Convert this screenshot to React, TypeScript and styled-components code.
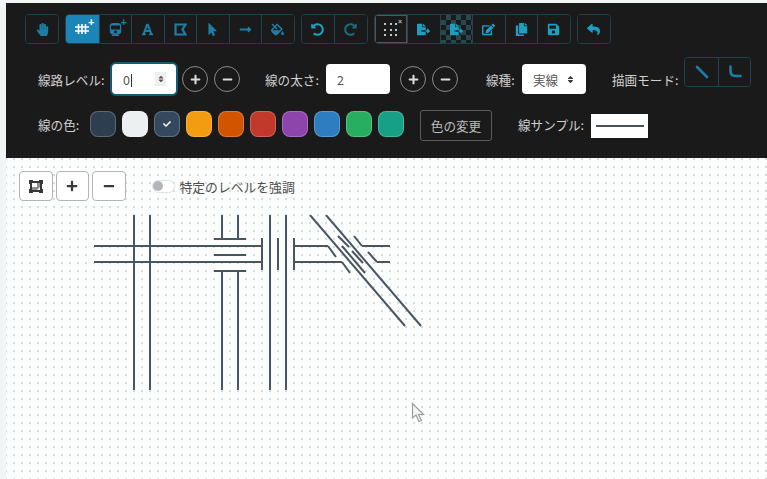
import React from "react";
import styled, { createGlobalStyle } from "styled-components";
import {
  FaHandPaper,
  FaTrain,
  FaFont,
  FaMousePointer,
  FaLongArrowAltRight,
  FaFillDrip,
  FaUndoAlt,
  FaRedoAlt,
  FaFileExport,
  FaEdit,
  FaCopy,
  FaSave,
  FaReply,
  FaPlus,
  FaMinus,
  FaCheck,
  FaSort,
} from "react-icons/fa";

const GlobalStyle = createGlobalStyle`
  html, body {
    margin: 0;
    padding: 0;
    height: 100%;
    overflow: hidden;
    background: #f1f5f6;
  }
  body {
    font-family: "Noto Sans CJK JP", "Noto Sans", sans-serif;
  }
`;

const Page = styled.div`
  width: 767px;
  height: 479px;
  padding: 3px 0 0 6px;
  box-sizing: border-box;
  display: flex;
  flex-direction: column;
  overflow: hidden;
`;

const Panel = styled.div`
  background: #1a1a1a;
  height: 155px;
  flex: none;
  box-sizing: border-box;
  padding: 11px 0 0 19px;
  display: flex;
  flex-direction: column;
`;

const Toolbar = styled.div`
  display: flex;
  gap: 6px;
  height: 30px;
`;

const Group = styled.div`
  display: flex;
  height: 30px;
  border: 1px solid #1f3f4b;
  border-radius: 4px;
  box-sizing: border-box;
  overflow: hidden;
`;

const toneColors = {
  active: "#fff",
  left: "#1d7da6",
  bright: "#1c9fc2",
  dim: "#1a6a80",
};

const ToolButton = styled.button<{
  $tone?: keyof typeof toneColors;
  $checker?: boolean;
  $outlined?: boolean;
  $w?: number;
}>`
  position: relative;
  width: ${(p) => p.$w ?? 32.5}px;
  height: 100%;
  padding: 0;
  border: none;
  border-left: 1px solid #1f4552;
  display: flex;
  align-items: center;
  justify-content: center;
  font-size: 13px;
  color: ${(p) => toneColors[p.$tone ?? "left"]};
  background-color: ${(p) => (p.$tone === "active" ? "#1b85b8" : "#1a1a1a")};
  ${(p) => (p.$outlined ? "box-shadow: inset 0 0 0 1px #555;" : "")}
  ${(p) =>
    p.$checker
      ? `background-image: conic-gradient(#24494f 25%, #1a1a1a 0 50%, #24494f 0 75%, #1a1a1a 0);
         background-size: 10px 10px;`
      : ""}
  &:first-child {
    border-left: none;
  }
`;

const PlusMark = styled.span<{ $color?: string }>`
  position: absolute;
  top: 1px;
  right: 4px;
  font-size: 11px;
  line-height: 12px;
  font-weight: 700;
  color: ${(p) => p.$color ?? "#fff"};
`;

const CrossMark = styled.span`
  position: absolute;
  top: 3px;
  right: 5px;
  font-size: 7px;
  line-height: 8px;
  font-weight: 700;
  color: #bdbdbd;
`;

const DotGrid = styled.span`
  display: grid;
  grid-template-columns: repeat(3, 2px);
  gap: 3.5px;
  margin-top: 1px;
  span {
    width: 2px;
    height: 2px;
    background: #c4c4c4;
  }
`;

const Row = styled.div<{ $top: number; $left: number }>`
  display: flex;
  align-items: center;
  margin-top: ${(p) => p.$top}px;
  margin-left: ${(p) => p.$left}px;
  height: 30px;
`;

const Label = styled.label<{ $w?: number; $gap?: number }>`
  color: #d0d0d0;
  font-size: 12.6px;
  white-space: nowrap;
  width: ${(p) => (p.$w ? `${p.$w}px` : "auto")};
  margin-left: ${(p) => p.$gap ?? 0}px;
`;

const Field = styled.div<{ $focus?: boolean }>`
  width: 64px;
  height: 30px;
  flex: none;
  box-sizing: border-box;
  background: #fff;
  border-radius: 4px;
  padding: 0 11px;
  display: flex;
  align-items: center;
  justify-content: space-between;
  color: #555;
  font-size: 12.6px;
  box-shadow: ${(p) => (p.$focus ? "0 0 0 2px #125a78" : "none")};
`;

const Caret = styled.span`
  display: inline-block;
  width: 1px;
  height: 13px;
  background: #333;
  margin-left: 1px;
  vertical-align: -2px;
`;

const Spin = styled.span`
  width: 11px;
  height: 14px;
  margin-right: -1px;
  background: #efefef;
  color: #555;
  font-size: 8px;
  display: flex;
  align-items: center;
  justify-content: center;
`;

const SelectArrow = styled.span`
  color: #3a3a3a;
  font-size: 9px;
  display: flex;
`;

const RoundButton = styled.button<{ $ml?: number }>`
  width: 26px;
  height: 26px;
  flex: none;
  padding: 0;
  margin-left: ${(p) => p.$ml ?? 6}px;
  border: 1px solid #8a8a8a;
  border-radius: 50%;
  background: transparent;
  color: #dcdcdc;
  font-size: 11px;
  display: flex;
  align-items: center;
  justify-content: center;
`;

const ModeGroup = styled(Group)`
  border-color: #1d4152;
  margin-left: 6px;
  margin-top: -14px;
  flex: none;
`;

const Swatches = styled.div`
  display: flex;
  gap: 6px;
  margin-left: 10px;
`;

const Swatch = styled.button<{ $color: string }>`
  width: 26px;
  height: 26px;
  padding: 0;
  border: 1px solid rgba(255, 255, 255, 0.22);
  border-radius: 8px;
  background: ${(p) => p.$color};
  color: #fff;
  font-size: 8px;
  display: flex;
  align-items: center;
  justify-content: center;
`;

const OutlineButton = styled.button`
  width: 72px;
  height: 31px;
  flex: none;
  margin-left: 16px;
  margin-top: 3px;
  padding: 0;
  border: 1px solid #5c5c5c;
  border-radius: 3px;
  background: transparent;
  color: #bdbdbd;
  font-family: inherit;
  font-size: 12.6px;
`;

const LineSample = styled.div`
  width: 57px;
  height: 24px;
  flex: none;
  margin-left: 7px;
  margin-top: 4px;
  background: #fff;
  display: flex;
  align-items: center;
  justify-content: center;
  &::after {
    content: "";
    width: 48px;
    height: 2px;
    background: #44505c;
  }
`;

const Canvas = styled.div`
  position: relative;
  flex: 1;
  background-color: #fcfdfd;
  background-image: radial-gradient(circle at 2px 2px, #d0d3d5 0.65px, transparent 1px);
  background-size: 8px 8px;
  background-position: 6px 7px;
  padding: 13px 0 0 13px;
`;

const CanvasBar = styled.div`
  display: flex;
  align-items: center;
  height: 30px;
  gap: 3px;
`;

const ZoomButton = styled.button`
  width: 33.5px;
  height: 30px;
  padding: 0;
  border: 1px solid #b4b4b4;
  border-radius: 4px;
  background: #fff;
  color: #383838;
  font-size: 12px;
  display: flex;
  align-items: center;
  justify-content: center;
`;

const Toggle = styled.span`
  position: relative;
  width: 23px;
  height: 13px;
  margin-left: 23px;
  box-sizing: border-box;
  border: 1px solid #e2e2e2;
  border-radius: 7px;
  background: #fff;
  &::before {
    content: "";
    position: absolute;
    left: 0;
    top: 0.5px;
    width: 10px;
    height: 10px;
    border-radius: 50%;
    background: #b3b5b9;
  }
`;

const ToggleLabel = styled.span`
  margin-left: 2px;
  font-size: 12.8px;
  color: #4f4f4f;
`;

const Drawing = styled.svg`
  display: block;
  margin: 14px 0 0 -13px;
`;

const Pointer = styled.svg`
  position: absolute;
  left: 405px;
  top: 244px;
`;

const colors = [
  "#2c3e50",
  "#ecf0f1",
  "#34495e",
  "#f39c12",
  "#d35400",
  "#c0392b",
  "#8e44ad",
  "#2e7dc0",
  "#27ae60",
  "#16a085",
];

// x1 y1 x2 y2 in page coordinates, origin of the drawing is (6, 215)
const segments: number[][] = [
  [134, 215, 134, 390],
  [150, 215, 150, 390],
  [94, 246, 262, 246],
  [94, 262, 262, 262],
  [222, 215, 222, 239],
  [238, 215, 238, 239],
  [214, 239, 246, 239],
  [214, 255, 246, 255],
  [214, 271, 246, 271],
  [222, 271, 222, 390],
  [238, 271, 238, 390],
  [262, 238, 262, 270],
  [270, 215, 270, 390],
  [286, 215, 286, 390],
  [278, 238, 278, 270],
  [294, 238, 294, 270],
  [294, 246, 328, 246],
  [328, 246, 336, 257],
  [294, 262, 342, 262],
  [342, 262, 350, 273],
  [310, 215, 405, 326],
  [326, 215, 421, 326],
  [338, 236, 349, 247],
  [342, 246, 365, 273],
  [352, 251, 363, 263],
  [354, 236, 362, 246],
  [362, 246, 390, 246],
  [368, 252, 377, 262],
  [377, 262, 390, 262],
];

const TrackIcon = () => (
  <svg width="14" height="10" viewBox="0 0 14 10" fill="none" stroke="currentColor" strokeWidth="1.6">
    <path d="M0 3 H14 M0 7 H14 M3.5 0 V10 M7 0 V10 M10.5 0 V10" />
  </svg>
);

const AreaIcon = () => (
  <svg width="13" height="13" viewBox="0 0 13 13" fill="none" stroke="currentColor" strokeWidth="2.2">
    <path d="M1.5 1.5 H11.5 L8.5 6.5 L11.5 11.5 H1.5 Z" />
  </svg>
);

const FitIcon = () => (
  <svg width="14" height="13" viewBox="0 0 14 13" fill="#383838">
    <path d="M0 0 H4 V1 H10 V0 H14 V4 H13 V9 H14 V13 H10 V12 H4 V13 H0 V9 H1 V4 H0 Z M3 3 V10 H11 V3 Z" fillRule="evenodd" />
    <path d="M3 7 H8 V3 H11 V7 L8 10 H3 Z" fill="#8d8d8d" />
  </svg>
);

const App: React.FC = () => {
  return (
    <Page>
      <GlobalStyle />
      <Panel>
        <Toolbar>
          <Group>
            <ToolButton $w={32} $tone="left">
              <FaHandPaper />
            </ToolButton>
          </Group>
          <Group>
            <ToolButton $tone="active">
              <TrackIcon />
              <PlusMark>+</PlusMark>
            </ToolButton>
            <ToolButton>
              <FaTrain />
              <PlusMark $color="#1d7da6">+</PlusMark>
            </ToolButton>
            <ToolButton>
              <FaFont />
            </ToolButton>
            <ToolButton>
              <AreaIcon />
            </ToolButton>
            <ToolButton>
              <FaMousePointer />
            </ToolButton>
            <ToolButton>
              <FaLongArrowAltRight />
            </ToolButton>
            <ToolButton>
              <FaFillDrip />
            </ToolButton>
          </Group>
          <Group>
            <ToolButton $tone="bright">
              <FaUndoAlt />
            </ToolButton>
            <ToolButton $tone="dim">
              <FaRedoAlt />
            </ToolButton>
          </Group>
          <Group>
            <ToolButton $outlined>
              <DotGrid>
                {Array.from({ length: 9 }, (_, i) => (
                  <span key={i} />
                ))}
              </DotGrid>
              <CrossMark>×</CrossMark>
            </ToolButton>
            <ToolButton $tone="bright">
              <FaFileExport />
            </ToolButton>
            <ToolButton $tone="bright" $checker>
              <FaFileExport />
            </ToolButton>
            <ToolButton $tone="bright">
              <FaEdit />
            </ToolButton>
            <ToolButton $tone="bright">
              <FaCopy />
            </ToolButton>
            <ToolButton $tone="bright">
              <FaSave />
            </ToolButton>
          </Group>
          <Group>
            <ToolButton $w={32} $tone="bright">
              <FaReply />
            </ToolButton>
          </Group>
        </Toolbar>
        <Row $top={20} $left={13}>
          <Label $w={74}>線路レベル:</Label>
          <Field $focus>
            <span>
              0<Caret />
            </span>
            <Spin>
              <FaSort />
            </Spin>
          </Field>
          <RoundButton>
            <FaPlus />
          </RoundButton>
          <RoundButton>
            <FaMinus />
          </RoundButton>
          <Label $w={61} $gap={25}>
            線の太さ:
          </Label>
          <Field>
            <span>2</span>
          </Field>
          <RoundButton $ml={10}>
            <FaPlus />
          </RoundButton>
          <RoundButton>
            <FaMinus />
          </RoundButton>
          <Label $w={36} $gap={28}>
            線種:
          </Label>
          <Field>
            <span>実線</span>
            <SelectArrow>
              <FaSort />
            </SelectArrow>
          </Field>
          <Label $gap={26}>描画モード:</Label>
          <ModeGroup>
            <ToolButton>
              <svg width="14" height="14" viewBox="0 0 14 14">
                <path d="M2 2 L12 12" stroke="currentColor" strokeWidth="2.6" strokeLinecap="round" />
              </svg>
            </ToolButton>
            <ToolButton>
              <svg width="14" height="14" viewBox="0 0 14 14">
                <path
                  d="M2.5 1.5 V6 Q2.5 11 8 11 H12.5"
                  fill="none"
                  stroke="currentColor"
                  strokeWidth="2.6"
                  strokeLinecap="round"
                />
              </svg>
            </ToolButton>
          </ModeGroup>
        </Row>
        <Row $top={15} $left={13}>
          <Label $w={42}>線の色:</Label>
          <Swatches>
            {colors.map((c, i) => (
              <Swatch key={c} $color={c}>
                {i === 2 && <FaCheck />}
              </Swatch>
            ))}
          </Swatches>
          <OutlineButton>色の変更</OutlineButton>
          <Label $gap={26}>線サンプル:</Label>
          <LineSample />
        </Row>
      </Panel>
      <Canvas>
        <CanvasBar>
          <ZoomButton>
            <FitIcon />
          </ZoomButton>
          <ZoomButton>
            <FaPlus />
          </ZoomButton>
          <ZoomButton>
            <FaMinus />
          </ZoomButton>
          <Toggle />
          <ToggleLabel>特定のレベルを強調</ToggleLabel>
        </CanvasBar>
        <Drawing width="430" height="180" viewBox="6 215 430 180">
          {segments.map((s, i) => (
            <line key={i} x1={s[0]} y1={s[1]} x2={s[2]} y2={s[3]} stroke="#4a5562" strokeWidth="2" />
          ))}
        </Drawing>
        <Pointer width="16" height="22" viewBox="0 0 16 22">
          <path d="M1.5 1.5 V16 L5 13 L8 19.5 L10.5 18.5 L7.5 12.5 L12.5 12.5 Z" fill="#f4f4f4" stroke="#9a9ea2" strokeWidth="1.2" />
        </Pointer>
      </Canvas>
    </Page>
  );
};

export default App;
